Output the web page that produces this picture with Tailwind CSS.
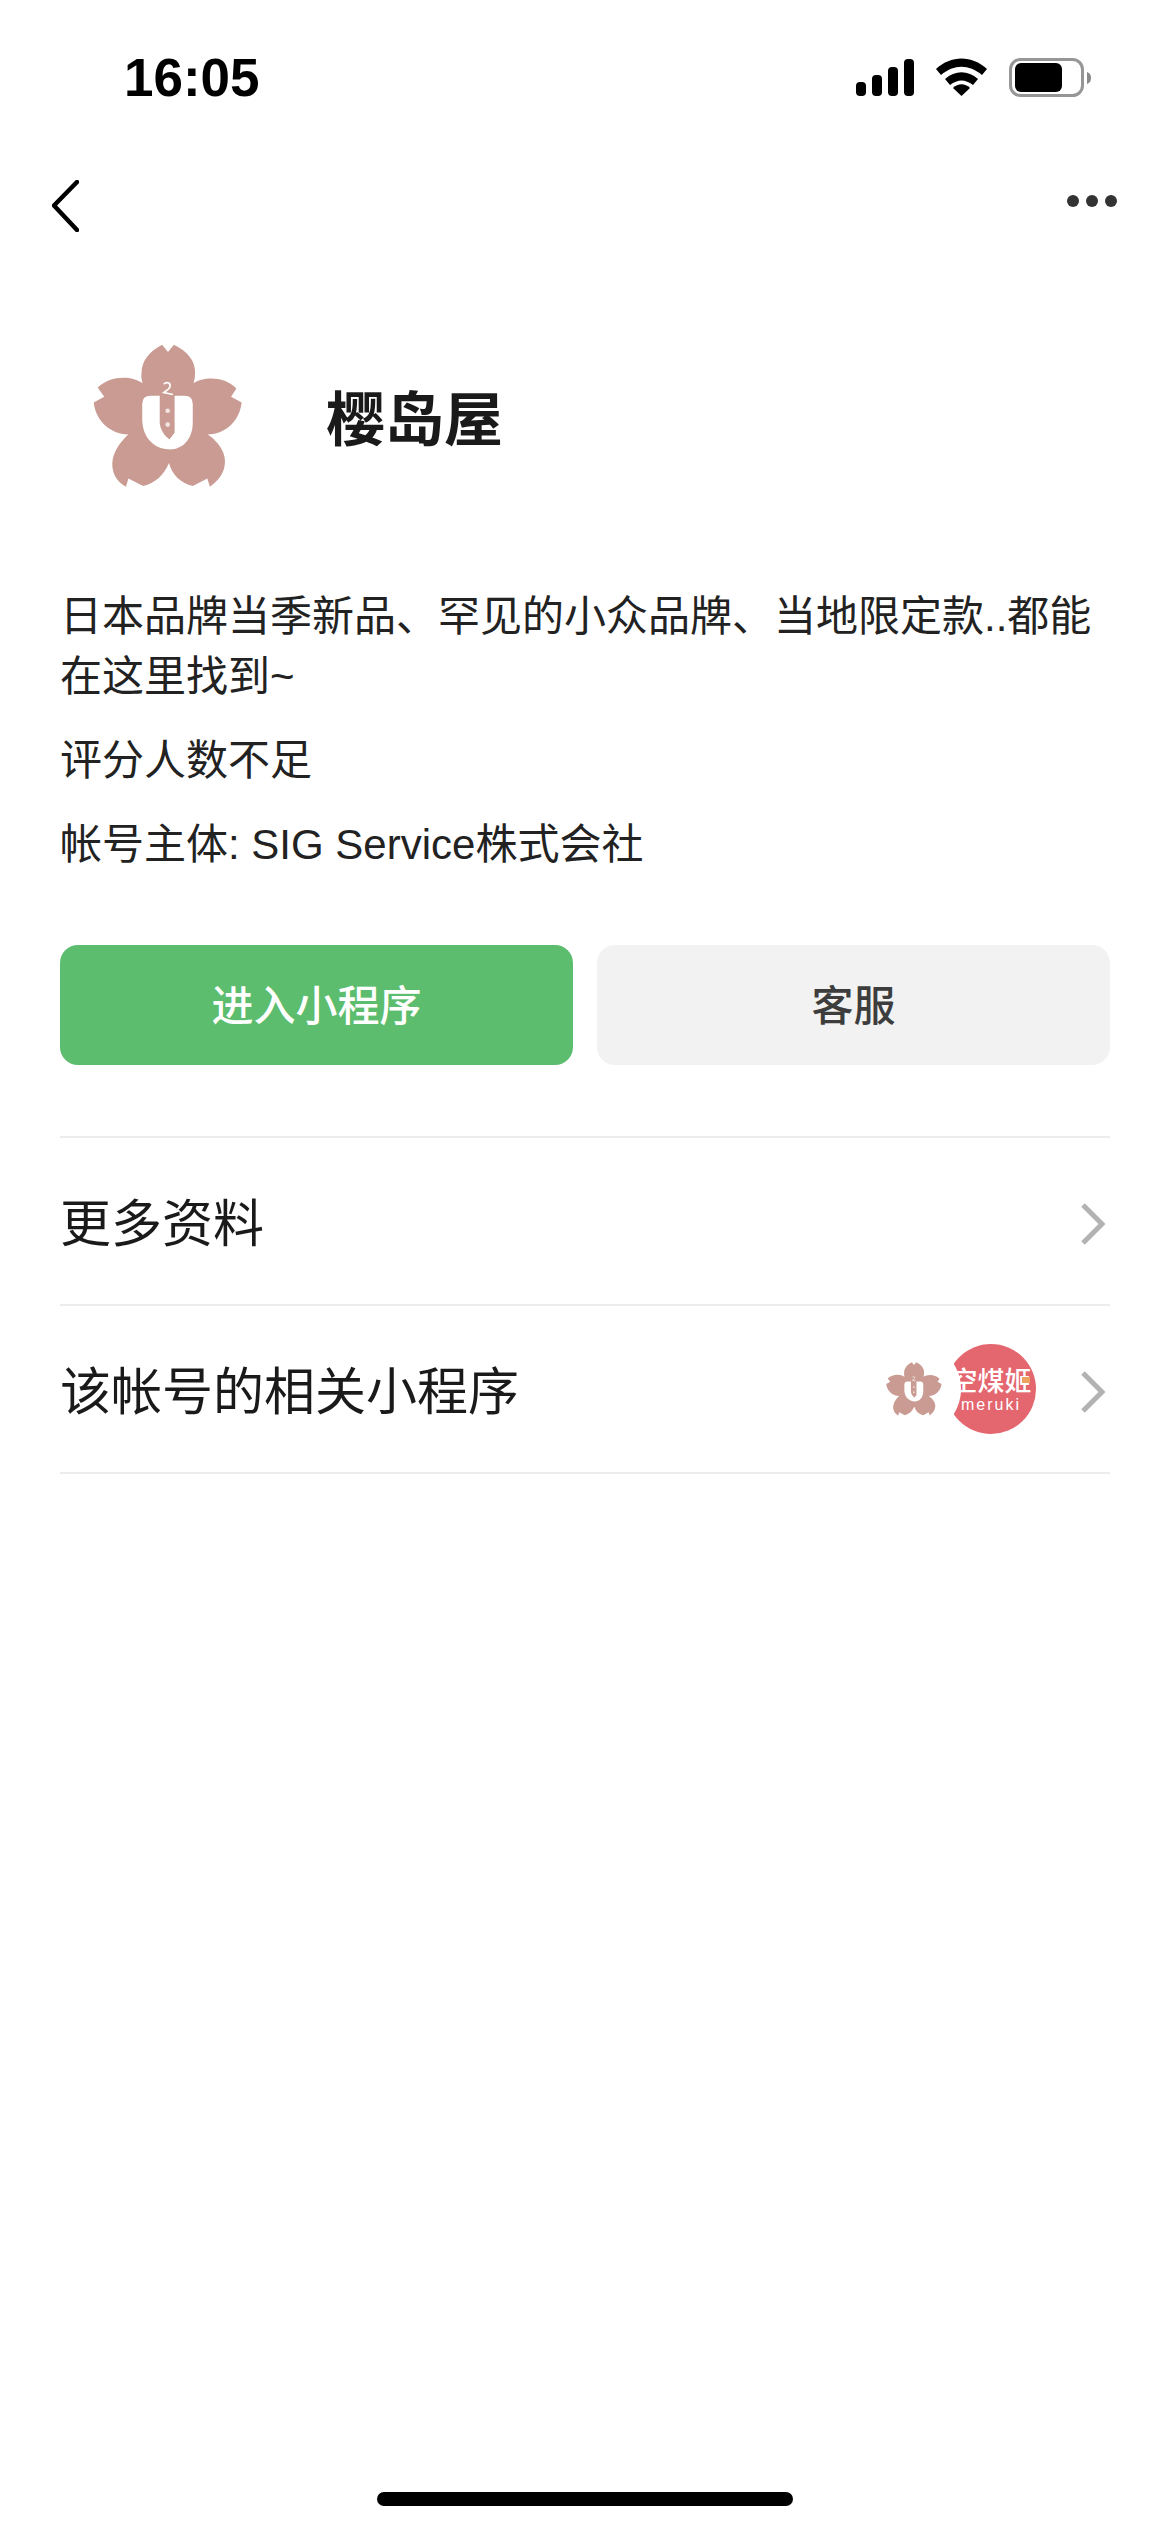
<!DOCTYPE html>
<html lang="zh">
<head>
<meta charset="utf-8">
<script src="https://cdn.jsdelivr.net/npm/@tailwindcss/browser@4"></script>
</head>
<body class="bg-white">
<svg width="0" height="0" class="absolute">
  <defs>
    <symbol id="flower" viewBox="98 103 454 436">
      <path d="M325 127L343 105C385 125 408 155 407 190C407 203 405 213 402 222C430 202 495 198 532 238L516 263L548 280C542 335 500 376 445 377C480 400 508 440 494 482C487 505 470 522 452 535L444 510L400 533C365 525 338 500 328 463C312 500 285 525 250 533L205 510L198 535C170 522 150 490 158 450C165 420 185 395 205 377C150 376 106 335 100 280L132 263L112 235C150 198 215 198 248 222C245 210 243 200 245 190C245 155 268 125 307 105Z" fill="#c99b92"/>
      <path d="M247 285Q247 260 272 260L375 260Q400 260 400 285L400 340C400 395 365 425 325 422C280 418 247 385 247 330Z" fill="#fff"/>
      <path d="M300 255L345 255L345 372L330 392C315 383 300 360 300 340Z" fill="#c99b92"/>
      <path d="M345 372C352 385 356 396 358 410L330 392Z" fill="#fff"/>
      <path d="M312 225C320 216 334 220 331 232C329 240 320 244 312 250L340 256" fill="none" stroke="#fff" stroke-width="5"/>
      <circle cx="324" cy="305" r="7" fill="#f3e6e2"/>
      <circle cx="324" cy="347" r="7" fill="#f3e6e2"/>
    </symbol>
  </defs>
</svg>
<div class="w-[1170px] h-[2532px] flex flex-col bg-white overflow-hidden text-[#1a1a1a] font-['Noto_Sans_CJK_SC','Liberation_Sans',sans-serif]">

  <!-- status bar -->
  <div class="h-[156px] flex items-center justify-between pl-[124px] pr-[79px]">
    <span class="font-['Liberation_Sans',sans-serif] font-bold text-[53px] leading-none text-black -mt-[2px]">16:05</span>
    <svg width="235" height="40" viewBox="856 58 235 40" class="shrink-0">
      <rect x="856" y="82" width="10" height="14" rx="4"/>
      <rect x="872" y="75" width="10" height="21" rx="4"/>
      <rect x="888" y="67" width="10" height="29" rx="4"/>
      <rect x="904" y="59" width="10" height="37" rx="4"/>
      <path d="M936 69C951 55 972 55 987 69L982 75C969 64 954 64 941 75Z"/>
      <path d="M945 79C955 70 968 70 978 79L973 85C965 79 958 79 950 85Z"/>
      <path d="M953 88C958 83 965 83 970 88L961.500 96Z"/>
      <rect x="1010.500" y="59.500" width="72" height="36" rx="10" fill="none" stroke="#969696" stroke-width="3"/>
      <rect x="1015" y="63" width="47" height="29" rx="6"/>
      <path d="M1087 72C1090 73 1091 75 1091 78C1091 81 1090 83 1087 84Z" fill="#8a8a8a"/>
    </svg>
  </div>

  <!-- nav -->
  <div class="h-[100px] flex items-center justify-between pl-[52px] pr-[53px]">
    <svg width="27" height="52" viewBox="0 0 27 52" fill="none" stroke="#000" stroke-width="4.500" stroke-linecap="round" stroke-linejoin="round"><path d="M25 2L2 25.500L25 50"/></svg>
    <svg width="50" height="12" viewBox="0 0 50 12" fill="#333" class="-mt-[10px]"><circle cx="6" cy="6" r="6"/><circle cx="25" cy="6" r="6"/><circle cx="44" cy="6" r="6"/></svg>
  </div>

  <!-- header -->
  <div class="flex items-center mt-[88px] pl-[93px]">
    <svg width="150" height="144" class="shrink-0"><use href="#flower"/></svg>
    <h1 class="ml-[83px] text-[59px] leading-none font-bold text-[#1a1a1a] -mt-[2px]">樱岛屋</h1>
  </div>

  <!-- description -->
  <div class="mt-[99px] px-[60px] text-[42px] leading-[60px] text-[#222] font-['Liberation_Sans','Noto_Sans_CJK_SC',sans-serif]">
    <p>日本品牌当季新品、罕见的小众品牌、当地限定款..都能<br>在这里找到~</p>
    <p class="mt-[24px]">评分人数不足</p>
    <p class="mt-[24px]">帐号主体: SIG Service株式会社</p>
  </div>

  <!-- buttons -->
  <div class="mt-[70px] mx-[60px] grid grid-cols-2 gap-[24px]">
    <button class="h-[120px] pb-[5px] rounded-[18px] bg-[#5bbd6d] text-white text-[42px] font-medium">进入小程序</button>
    <button class="h-[120px] pb-[5px] rounded-[18px] bg-[#f2f2f2] text-[#3d3d3d] text-[42px] font-medium">客服</button>
  </div>

  <!-- rows -->
  <div class="mt-[71px] mx-[60px] border-t-2 border-[#ececec]">
    <div class="h-[168px] border-b-2 border-[#ececec] flex items-center justify-between">
      <span class="text-[51px] leading-none text-[#1a1a1a] -mt-[2px]">更多资料</span>
      <svg width="24" height="42" viewBox="0 0 24 42" fill="none" stroke="#b2b2b2" stroke-width="5" class="mr-[5px] mt-[6px]"><path d="M2 2L21 21L2 40"/></svg>
    </div>
    <div class="h-[168px] border-b-2 border-[#ececec] flex items-center justify-between">
      <span class="text-[51px] leading-none text-[#1a1a1a] -mt-[2px]">该帐号的相关小程序</span>
      <div class="flex items-center">
        <div class="relative z-10 w-[94px] h-[94px] rounded-full bg-white flex items-center justify-center">
          <svg width="56" height="54" class="shrink-0"><use href="#flower"/></svg>
        </div>
        <div class="relative -ml-[15px] w-[90px] h-[90px] rounded-full bg-[#e4666f] flex flex-col items-center justify-center gap-[2px] overflow-hidden text-white">
          <span class="text-[27px] leading-[29px] whitespace-nowrap font-medium">空煤姬</span>
          <span class="text-[16px] leading-[18px] tracking-[2px] font-['Liberation_Sans',sans-serif]">meruki</span>
          <span class="absolute left-[76px] top-[33px] w-[8px] h-[6px] bg-[#eda25f]"></span>
        </div>
        <svg width="24" height="42" viewBox="0 0 24 42" fill="none" stroke="#b2b2b2" stroke-width="5" class="ml-[45px] mr-[5px] mt-[6px]"><path d="M2 2L21 21L2 40"/></svg>
      </div>
    </div>
  </div>

  <!-- home indicator -->
  <div class="mt-auto mb-[26px] mx-auto w-[416px] h-[14px] rounded-full bg-black"></div>
</div>
</body>
</html>
